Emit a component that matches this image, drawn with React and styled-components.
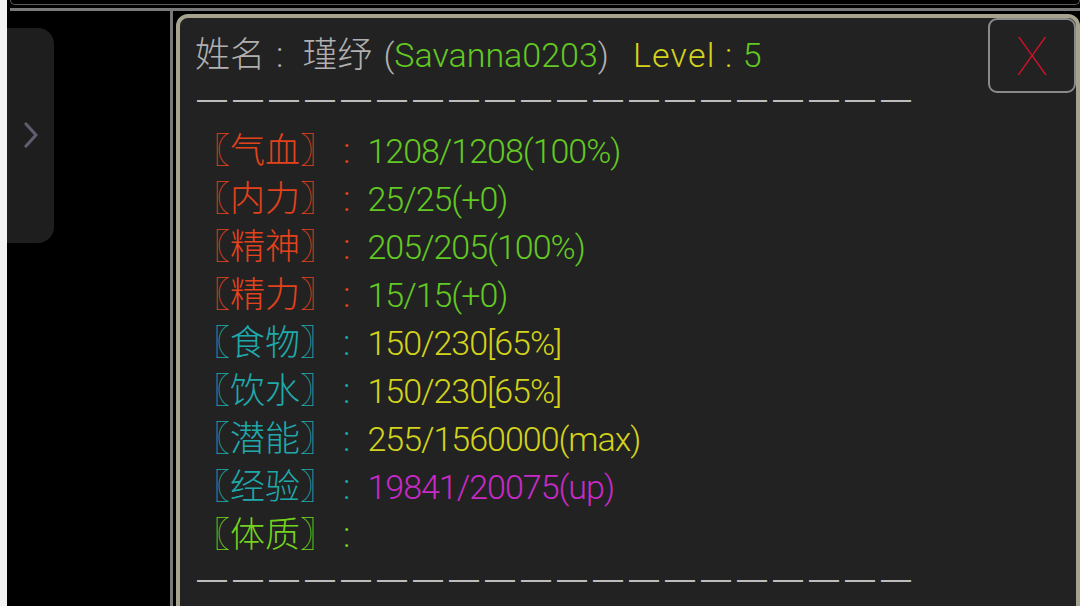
import styled, { createGlobalStyle } from "styled-components";

const GlobalStyle = createGlobalStyle`
  html, body {
    margin: 0;
    padding: 0;
    background: #000;
  }
  body {
    font-family: Roboto, "Noto Sans CJK SC", sans-serif;
    font-weight: 300;
    text-spacing-trim: space-all;
  }
`;

const Screen = styled.div`
  width: 1080px;
  height: 606px;
  display: flex;
  overflow: hidden;
  background: #000;
`;

const Edge = styled.div`
  width: 7px;
  flex-shrink: 0;
  background: #f2f2f2;
`;

const Main = styled.div`
  flex: 1;
  min-width: 0;
  display: flex;
  flex-direction: column;
`;

const TopBar = styled.div`
  margin-left: 3px;
  height: 8px;
  box-sizing: border-box;
  padding-bottom: 3px;
`;

const HeaderEdge = styled.div`
  height: 5px;
  box-sizing: border-box;
  border: 1.5px solid #5a5a5a;
  border-top: none;
  border-radius: 0 0 10px 10px;
`;

const TopLine = styled.div`
  margin-left: 3px;
  height: 3px;
  background: #7a7a7a;
`;

const Body = styled.div`
  flex: 1;
  display: flex;
  min-height: 0;
`;

const Sidebar = styled.div`
  width: 163px;
  flex-shrink: 0;
  padding-top: 17px;
`;

const Tab = styled.div`
  width: 47px;
  height: 215px;
  background: #1e1e1e;
  border-radius: 0 16px 16px 0;
  display: flex;
  align-items: center;
  justify-content: center;
  padding-bottom: 2px;
  box-sizing: border-box;
`;

const Content = styled.div`
  flex: 1;
  display: flex;
  border-left: 3px solid #777;
  padding: 3px 0 0 3px;
`;

const Dialog = styled.div`
  position: relative;
  flex: 1;
  height: 640px;
  background: #222;
  border: 4px solid #a5a38d;
  border-radius: 12px;
  padding: 13px 0 0 15px;
  box-sizing: border-box;
  display: flex;
  flex-direction: column;
`;

const Line = styled.div`
  height: 48px;
  line-height: 48px;
  font-size: 35px;
  white-space: nowrap;
  color: ${(p) => p.color || "#b0b0b0"};
`;

const Colon = styled.span`
  font-size: 35px;
  margin: 0 17px 0 8px;
`;

const TitleColon = styled(Colon)`
  margin: 0 19px 0 11px;
`;

const Part = styled.span`
  color: ${(p) => p.color};
  font-size: 34px;
`;

const Paren = styled(Part)`
  margin-left: ${(p) => (p.$open ? "11px" : "0")};
`;

const LevelTag = styled.span`
  color: ${(p) => p.color};
  font-size: 34px;
  letter-spacing: 1.2px;
  margin-left: 24px;
`;

const Value = styled.span`
  color: ${(p) => p.color};
  font-size: 34px;
  letter-spacing: -1px;
`;

const Rule = styled.div`
  height: 48px;
  line-height: 40px;
  font-size: 30px;
  font-family: "Liberation Sans", sans-serif;
  letter-spacing: 6px;
  padding-left: 2px;
  white-space: nowrap;
  color: #bdbdbd;
`;

const CloseButton = styled.div`
  position: absolute;
  top: 0;
  right: 0;
  width: 88px;
  height: 75px;
  box-sizing: border-box;
  border: 2px solid #8a8a8a;
  border-radius: 9px;
  background: #222;
  display: flex;
  align-items: center;
  justify-content: center;
  padding-top: 3px;
  color: #d0112b;
  font-size: 54px;
  font-weight: 100;
  line-height: 1;
`;

const RED = "#e2421c";
const CYAN = "#20a9ab";
const GREEN = "#62c822";
const YELLOW = "#d3d31c";
const MAGENTA = "#c82ac8";
const LIME = "#74d21e";

const stats = [
  { label: "气血", color: RED, value: "1208/1208(100%)", valueColor: GREEN },
  { label: "内力", color: RED, value: "25/25(+0)", valueColor: GREEN },
  { label: "精神", color: RED, value: "205/205(100%)", valueColor: GREEN },
  { label: "精力", color: RED, value: "15/15(+0)", valueColor: GREEN },
  { label: "食物", color: CYAN, value: "150/230[65%]", valueColor: YELLOW },
  { label: "饮水", color: CYAN, value: "150/230[65%]", valueColor: YELLOW },
  { label: "潜能", color: CYAN, value: "255/1560000(max)", valueColor: YELLOW },
  { label: "经验", color: CYAN, value: "19841/20075(up)", valueColor: MAGENTA },
  { label: "体质", color: LIME, value: "", valueColor: LIME },
];

const DASHES = "—".repeat(20);

export default function App() {
  return (
    <>
      <GlobalStyle />
      <Screen>
        <Edge />
        <Main>
          <TopBar>
            <HeaderEdge />
          </TopBar>
          <TopLine />
          <Body>
            <Sidebar>
              <Tab>
                <svg width="16" height="26" viewBox="0 0 16 26">
                  <polyline
                    points="3,2 13,13 3,24"
                    fill="none"
                    stroke="#5e5e6c"
                    strokeWidth="3.2"
                    strokeLinecap="round"
                    strokeLinejoin="round"
                  />
                </svg>
              </Tab>
            </Sidebar>
            <Content>
              <Dialog>
                <CloseButton>X</CloseButton>
                <Line>
                  姓名<TitleColon>:</TitleColon>瑾纾<Paren $open>(</Paren>
                  <Part color={GREEN}>Savanna0203</Part>
                  <Paren>)</Paren>
                  <LevelTag color={YELLOW}>Level : </LevelTag>
                  <Part color={GREEN}>5</Part>
                </Line>
                <Rule>{DASHES}</Rule>
                {stats.map((s) => (
                  <Line key={s.label} color={s.color}>
                    〖{s.label}〗<Colon>:</Colon>
                    <Value color={s.valueColor}>{s.value}</Value>
                  </Line>
                ))}
                <Rule>{DASHES}</Rule>
              </Dialog>
            </Content>
          </Body>
        </Main>
      </Screen>
    </>
  );
}
